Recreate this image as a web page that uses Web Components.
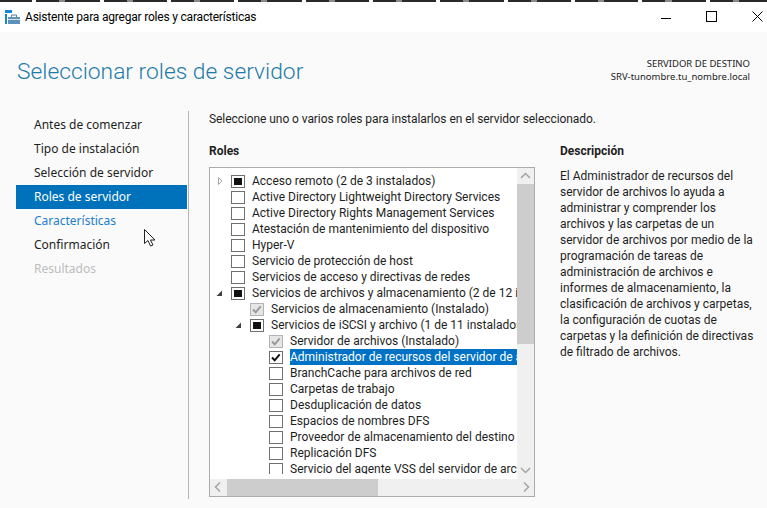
<!DOCTYPE html>
<html lang="es">
<head>
<meta charset="utf-8">
<title>Asistente para agregar roles y características</title>
<style>
  html, body { margin: 0; height: 100%; background: #fafafa; overflow: hidden; }
  body { font: 12px Roboto, "Liberation Sans", sans-serif; color: #1e1e1e; }
</style>
</head>
<body>
<wizard-window></wizard-window>
<script>
class TitleBar extends HTMLElement {
    constructor() {
        super();
        this.attachShadow({ mode: 'open' });
    }

    connectedCallback() {
        this.shadowRoot.innerHTML = `
            <style>
                :host {
                    display: flex;
                    align-items: center;
                    height: 30px;
                    background: #fff;
                    border-top: 2px solid transparent;
                    border-image: repeating-linear-gradient(90deg, #2a2a2a 0 34px, #fff 34px 38px, #2a2a2a 38px 61px, #8a8a8a 61px 67px) 2;
                    padding-left: 5px;
                    color: #000;
                }
                .logo { width: 15px; height: 15px; margin-right: 5px; flex: none; }
                .text { flex: 1; letter-spacing: -0.2px; }
                .btns { display: flex; margin-right: -14px; }
                .btns svg { width: 46px; height: 30px; display: block; }
            </style>
            <svg class="logo" viewBox="0 0 15 15">
                <rect x="0" y="0" width="7" height="3" fill="#1a86d0"/>
                <rect x="0" y="4" width="2" height="10" fill="#1a86d0"/>
                <rect x="3" y="7" width="12" height="7" fill="#5d93ba"/>
                <rect x="3" y="9" width="12" height="1" fill="#d5e3ee"/>
                <path d="M6.5 7V5h5v2" fill="none" stroke="#4c7e9f"/>
            </svg>
            <span class="text"><slot></slot></span>
            <div class="btns">
                <svg viewBox="0 0 46 30"><path d="M18 16.500h10" stroke="#000"/></svg>
                <svg viewBox="0 0 46 30"><rect x="17.500" y="9.500" width="10" height="10" fill="none" stroke="#000"/></svg>
                <svg viewBox="0 0 46 30"><path d="M17.500 9.500l10 10M27.500 9.500l-10 10" stroke="#000" fill="none"/></svg>
            </div>
        `;
    }
}

class WizardHeader extends HTMLElement {
    constructor() {
        super();
        this.attachShadow({ mode: 'open' });
    }

    connectedCallback() {
        this.shadowRoot.innerHTML = `
            <style>
                :host {
                    display: flex;
                    justify-content: space-between;
                    height: 79px;
                    padding: 0 17px 0 17px;
                }
                h1 {
                    margin: 21px 0 0;
                    font-size: 22.8px;
                    font-weight: 300;
                    line-height: 37px;
                    color: #1f7aa8;
                }
                .target {
                    margin-top: 25px;
                    text-align: right;
                    font-family: "Noto Sans", sans-serif;
                    font-size: 9.5px;
                    line-height: 13px;
                    color: #222;
                }
            </style>
            <h1>${this.getAttribute('heading')}</h1>
            <div class="target">SERVIDOR DE DESTINO<br>${this.getAttribute('server')}</div>
        `;
    }
}

class WizardNav extends HTMLElement {
    constructor() {
        super();
        this.attachShadow({ mode: 'open' });
    }

    connectedCallback() {
        const steps = [
            ['Antes de comenzar', ''],
            ['Tipo de instalación', ''],
            ['Selección de servidor', ''],
            ['Roles de servidor', 'on'],
            ['Características', 'link'],
            ['Confirmación', ''],
            ['Resultados', 'off']
        ];
        this.shadowRoot.innerHTML = `
            <style>
                :host {
                    display: block;
                    position: relative;
                    width: 172px;
                    margin-left: 16px;
                    padding-top: 2px;
                    border-right: 1px solid #b4b4b4;
                    box-sizing: content-box;
                    font-family: "Noto Sans", sans-serif;
                }
                div {
                    height: 24px;
                    line-height: 24px;
                    padding-left: 18px;
                    margin-right: 1px;
                }
                .on { background: #0072bc; color: #fff; }
                .link { color: #1a7fd0; }
                .off { color: #bdbdbd; }
                svg { position: absolute; left: 127px; top: 117px; }
            </style>
            ${steps.map(s => `<div class="${s[1]}">${s[0]}</div>`).join('')}
            <svg width="15" height="21" viewBox="0 0 15 21">
                <path d="M1.5 1.500v14l3.500-3 2.500 5.500 2.500-1-2.500-5h4.500z" fill="#fff" stroke="#222"/>
            </svg>
        `;
    }
}

class RoleItem extends HTMLElement {
    constructor() {
        super();
        this.attachShadow({ mode: 'open' });
    }

    connectedCallback() {
        const level = Number(this.getAttribute('level') || 0);
        const state = this.getAttribute('state') || 'empty';
        const arrow = this.getAttribute('arrow');
        let arrowSvg = '';
        if (arrow === 'closed') arrowSvg = '<path d="M2.500 2.500l3.500 3.500-3.500 3.500z" fill="#fff" stroke="#a6a6a6"/>';
        if (arrow === 'open') arrowSvg = '<path d="M6 3.500v5.500H.5z" fill="#404040"/>';
        let mark = '';
        if (state === 'mixed') mark = '<rect x="3" y="3" width="8" height="7" fill="#111"/>';
        if (state === 'checked') mark = '<path d="M3 6.500l2.700 2.800 5-6" fill="none" stroke="#111" stroke-width="2"/>';
        if (state === 'locked') mark = '<path d="M3 6.500l2.700 2.800 5-6" fill="none" stroke="#9a9a9a" stroke-width="2"/>';
        this.shadowRoot.innerHTML = `
            <style>
                :host {
                    display: flex;
                    align-items: center;
                    height: 16px;
                    padding-left: ${6 + level * 19}px;
                    white-space: nowrap;
                }
                .arrow { width: 10px; height: 12px; margin-right: 5px; flex: none; }
                .box { width: 14px; height: 13px; margin-right: 7px; flex: none; }
                .label { line-height: 16px; padding-right: 300px; }
                :host([selected]) .label { background: #0072c6; color: #fff; }
            </style>
            <svg class="arrow" viewBox="0 0 10 12">${arrowSvg}</svg>
            <svg class="box" viewBox="0 0 14 13">
                <rect x=".5" y=".5" width="13" height="12"
                      fill="${state === 'locked' ? '#e6e6e6' : '#fff'}"
                      stroke="${state === 'locked' ? '#b4b4b4' : '#6f6f6f'}"/>
                ${mark}
            </svg>
            <span class="label"><slot></slot></span>
        `;
    }
}

class ScrollBar extends HTMLElement {
    constructor() {
        super();
        this.attachShadow({ mode: 'open' });
    }

    connectedCallback() {
        const vertical = this.getAttribute('dir') === 'v';
        const a = vertical ? 'M4 10l4.500-4.500 4.500 4.500' : 'M10 3.500l-4.500 4.500 4.500 4.500';
        const b = vertical ? 'M4 5l4.500 4.500 4.500-4.500' : 'M7 3.500l4.500 4.500-4.500 4.500';
        this.shadowRoot.innerHTML = `
            <style>
                :host {
                    display: flex;
                    flex-direction: ${vertical ? 'column' : 'row'};
                    background: #f0f0f0;
                    ${vertical ? 'width: 17px;' : 'height: 17px;'}
                    flex: none;
                }
                svg { width: 17px; height: 16px; flex: none; display: block; }
                .thumb { background: #cdcdcd; flex: none; ${vertical ? 'height: 160px;' : 'width: 151px;'} }
                .rest { flex: 1; }
            </style>
            <svg viewBox="0 0 17 16"><path d="${a}" fill="none" stroke="#a3a3a3" stroke-width="1.500"/></svg>
            <div class="thumb"></div>
            <div class="rest"></div>
            <svg viewBox="0 0 17 16"><path d="${b}" fill="none" stroke="#a3a3a3" stroke-width="1.500"/></svg>
        `;
    }
}

class RoleTree extends HTMLElement {
    constructor() {
        super();
        this.attachShadow({ mode: 'open' });
    }

    connectedCallback() {
        this.shadowRoot.innerHTML = `
            <style>
                :host {
                    display: grid;
                    grid-template-columns: 307px 17px;
                    grid-template-rows: 311px 17px;
                    width: 324px;
                    height: 328px;
                    border: 1px solid #ababab;
                    background: #fff;
                    box-sizing: content-box;
                }
                .view { overflow: hidden; padding-top: 5px; box-sizing: border-box; }
                .clip { height: 301px; overflow: hidden; }
                .h { grid-column: 1 / 3; }
            </style>
            <div class="view"><div class="clip"><slot></slot></div></div>
            <scroll-bar dir="v"></scroll-bar>
            <scroll-bar class="h" dir="h"></scroll-bar>
        `;
    }
}

class WizardWindow extends HTMLElement {
    constructor() {
        super();
        this.attachShadow({ mode: 'open' });
    }

    connectedCallback() {
        const roles = [
            [0, 'mixed', 'closed', 'Acceso remoto (2 de 3 instalados)'],
            [0, 'empty', '', 'Active Directory Lightweight Directory Services'],
            [0, 'empty', '', 'Active Directory Rights Management Services'],
            [0, 'empty', '', 'Atestación de mantenimiento del dispositivo'],
            [0, 'empty', '', 'Hyper-V'],
            [0, 'empty', '', 'Servicio de protección de host'],
            [0, 'empty', '', 'Servicios de acceso y directivas de redes'],
            [0, 'mixed', 'open', 'Servicios de archivos y almacenamiento (2 de 12 instalados)'],
            [1, 'locked', '', 'Servicios de almacenamiento (Instalado)'],
            [1, 'mixed', 'open', 'Servicios de iSCSI y archivo (1 de 11 instalados)'],
            [2, 'locked', '', 'Servidor de archivos (Instalado)'],
            [2, 'checked', '', 'Administrador de recursos del servidor de archivos', true],
            [2, 'empty', '', 'BranchCache para archivos de red'],
            [2, 'empty', '', 'Carpetas de trabajo'],
            [2, 'empty', '', 'Desduplicación de datos'],
            [2, 'empty', '', 'Espacios de nombres DFS'],
            [2, 'empty', '', 'Proveedor de almacenamiento del destino iSCSI'],
            [2, 'empty', '', 'Replicación DFS'],
            [2, 'empty', '', 'Servicio del agente VSS del servidor de archivos']
        ];
        this.shadowRoot.innerHTML = `
            <style>
                :host { display: flex; flex-direction: column; height: 508px; }
                .body { display: flex; flex: 1; min-height: 0; }
                wizard-nav { height: 386px; }
                .main { margin-left: 20px; flex: 1; }
                .intro { line-height: 16px; margin-top: 0; letter-spacing: -0.07px; }
                .cols { display: flex; margin-top: 16px; }
                .left { width: 326px; flex: none; }
                .right { margin-left: 25px; width: 200px; }
                h2 { margin: 0; font-size: 12px; font-weight: 700; line-height: 16px; }
                .left h2 { margin-bottom: 8px; }
                .right h2 { margin-bottom: 9px; }
                p { margin: 0; line-height: 16px; white-space: nowrap; }
            </style>
            <title-bar>Asistente para agregar roles y características</title-bar>
            <wizard-header heading="Seleccionar roles de servidor" server="SRV-tunombre.tu_nombre.local"></wizard-header>
            <div class="body">
                <wizard-nav></wizard-nav>
                <div class="main">
                    <div class="intro">Seleccione uno o varios roles para instalarlos en el servidor seleccionado.</div>
                    <div class="cols">
                        <div class="left">
                            <h2>Roles</h2>
                            <role-tree>
                                ${roles.map(r => `<role-item level="${r[0]}" state="${r[1]}" arrow="${r[2]}"${r[4] ? ' selected' : ''}>${r[3]}</role-item>`).join('')}
                            </role-tree>
                        </div>
                        <div class="right">
                            <h2>Descripción</h2>
                            <p>El Administrador de recursos del<br>servidor de archivos lo ayuda a<br>administrar y comprender los<br>archivos y las carpetas de un<br>servidor de archivos por medio de la<br>programación de tareas de<br>administración de archivos e<br>informes de almacenamiento, la<br>clasificación de archivos y carpetas,<br>la configuración de cuotas de<br>carpetas y la definición de directivas<br>de filtrado de archivos.</p>
                        </div>
                    </div>
                </div>
            </div>
        `;
    }
}

customElements.define('title-bar', TitleBar);
customElements.define('wizard-header', WizardHeader);
customElements.define('wizard-nav', WizardNav);
customElements.define('role-item', RoleItem);
customElements.define('scroll-bar', ScrollBar);
customElements.define('role-tree', RoleTree);
customElements.define('wizard-window', WizardWindow);
</script>
</body>
</html>
